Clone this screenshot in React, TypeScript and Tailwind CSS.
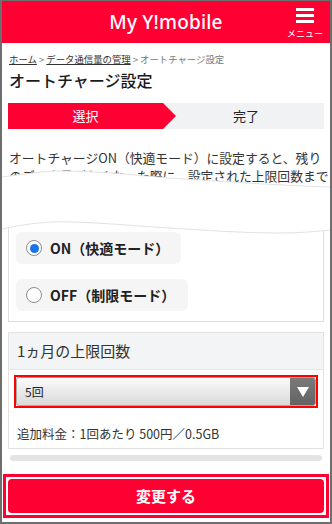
import React from "react";

const RED = "bg-[#ff0033]";

const Radio = ({ label, checked, w }: { label: string; checked?: boolean; w: string }) => (
  <div className={`flex h-[32px] items-center gap-[8px] rounded-[6px] bg-[#f5f5f5] pl-[10px] ${w}`}>
    <span className="flex h-[16px] w-[16px] items-center justify-center rounded-full border-[1.5px] border-[#8c8c8c] bg-white">
      {checked && <span className="h-[9px] w-[9px] rounded-full bg-[#1a73e8]" />}
    </span>
    <span className="text-[14px] font-bold leading-none text-[#222]">{label}</span>
  </div>
);

export default function App() {
  return (
    <div className="flex h-[524px] w-[332px] flex-col overflow-hidden border-x-2 border-b-2 border-t border-[#6e6e6e] bg-white font-['Noto_Sans_CJK_JP',sans-serif] text-[#333]">
      {/* Header */}
      <header className={`grid h-[42px] shrink-0 grid-cols-[1fr_auto_1fr] items-center ${RED}`}>
        <div />
        <div className="font-['Noto_Sans',sans-serif] text-[19px] font-medium leading-none tracking-[0.2px] text-white">
          My Y!mobile
        </div>
        <div className="flex justify-end pr-[7px]">
          <div className="flex flex-col items-center">
            <div className="flex w-[18px] flex-col gap-[3px] pt-[1px]">
              <span className="h-[3px] bg-white" />
              <span className="h-[3px] bg-white" />
              <span className="h-[3px] bg-white" />
            </div>
            <span className="mt-[6px] text-[9px] leading-none text-white">メニュー</span>
          </div>
        </div>
      </header>

      <main className="flex flex-col px-[6px]">
        {/* Breadcrumb */}
        <nav className="mt-[10px] pl-[1px] text-[9.4px] leading-[12px] text-[#777]">
          <span className="text-[#333] underline">ホーム</span>
          <span> &gt; </span>
          <span className="text-[#333] underline">データ通信量の管理</span>
          <span> &gt; オートチャージ設定</span>
        </nav>

        <h1 className="mt-[5px] pl-[1px] text-[16px] font-medium leading-[20px] text-[#1a1a1a]">オートチャージ設定</h1>

        {/* Steps */}
        <div className="mt-[13px] flex h-[26px] bg-[#f0f2f3] text-[13px]">
          <div className={`flex w-[155px] items-center justify-center text-white ${RED}`}>選択</div>
          <svg width="13" height="26" viewBox="0 0 13 26" className="shrink-0">
            <path d="M0 0 L13 13 L0 26 Z" fill="#ff0033" />
          </svg>
          <div className="flex flex-1 items-center justify-center pr-[8px] text-[#222]">完了</div>
        </div>

        {/* Torn description + mode */}
        <div className="relative">
          <p className="mt-[20px] whitespace-nowrap pl-[1px] text-[12.8px] leading-[18px] text-[#333]">
            オートチャージON（快適モード）に設定すると、残り
            <br />
            のデータ量がなくなった際に、設定された上限回数まで
          </p>

          <div className="mt-[30px] flex flex-col gap-[15px] border border-[#dedede] pb-[10px] pl-[7px] pt-[16px]">
            <Radio label="ON（快適モード）" checked w="w-[165px]" />
            <Radio label="OFF（制限モード）" w="w-[172px]" />
          </div>

          <svg
            className="absolute left-[-6px] top-[36px]"
            width="328"
            height="75"
            viewBox="0 0 328 75"
            preserveAspectRatio="none"
          >
            <path
              d="M0 12 C30 8 45 6 57 6 C100 6 130 10 167 13 C230 17 290 21 328 22 L328 65 C310 67 295 68 277 68 C240 68 200 65 167 63 C120 60 80 56 50 57 C30 58 15 61 0 64 Z"
              fill="#fff"
            />
            <path d="M0 12 C30 8 45 6 57 6 C100 6 130 10 167 13 C230 17 290 21 328 22" fill="none" stroke="#e2e2e2" />
            <path d="M328 65 C310 67 295 68 277 68 C240 68 200 65 167 63 C120 60 80 56 50 57 C30 58 15 61 0 64" fill="none" stroke="#e2e2e2" />
          </svg>
        </div>

        {/* Limit */}
        <section className="mt-[10px] border border-[#e2e2e2]">
          <div className="flex h-[37px] items-center border-b border-[#e6e6e6] bg-[#f2f4f5] pl-[8px] text-[15px] text-[#333]">
            1ヵ月の上限回数
          </div>
          <div className="mx-[5px] mt-[5px] border-2 border-[#ff0000]">
            <div className="flex h-[29px] overflow-hidden rounded-[3px] border border-[#a8a8a8] bg-gradient-to-b from-[#fbfbfb] to-[#d9d9d9]">
              <span className="flex flex-1 items-center pl-[8px] text-[12px] text-[#222]">5回</span>
              <span className="flex w-[25px] items-center justify-center bg-gradient-to-b from-[#7a7a7a] to-[#636363]">
                <svg width="12" height="10" viewBox="0 0 12 10">
                  <path d="M0 0 H12 L6 10 Z" fill="#fff" />
                </svg>
              </span>
            </div>
          </div>
          <p className="mt-[17px] pb-[5px] pl-[8px] text-[12.5px] leading-[18px] text-[#333]">
            追加料金：1回あたり 500円／0.5GB
          </p>
        </section>

        <div className="mx-[2px] mt-[6px] h-[6px] rounded-full bg-[#e4e4e4]" />

        {/* Submit */}
        <div className="-mx-[5px] mt-[13px] border-[3px] border-[#ff0033] p-[2px]">
          <button className={`flex h-[34px] w-full items-center justify-center rounded-[4px] text-[15px] font-bold text-white ${RED}`}>
            変更する
          </button>
        </div>
      </main>
    </div>
  );
}
